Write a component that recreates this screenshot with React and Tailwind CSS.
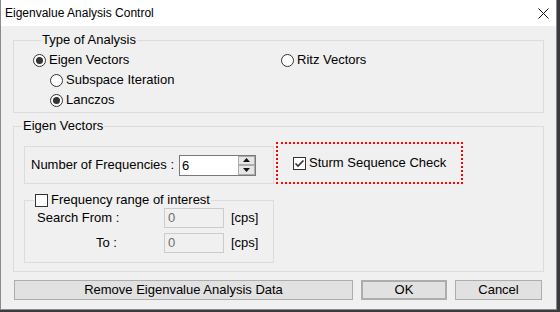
import React from 'react';

const Radio = ({ checked, label }) => (
  <div className="flex items-center h-4 gap-[3px]">
    <span className="w-[13px] h-[13px] rounded-full border border-[#333] bg-white flex items-center justify-center">
      {checked && <span className="w-[7px] h-[7px] rounded-full bg-[#333]" />}
    </span>
    <span>{label}</span>
  </div>
);

const Check = ({ checked }) => (
  <span className="w-[13px] h-[13px] border border-[#333] bg-white flex items-center justify-center">
    {checked && (
      <svg width="11" height="11" viewBox="0 0 11 11">
        <path d="M1.5 5.5 L4 8 L9.5 2.5" stroke="#333" strokeWidth="1.6" fill="none" />
      </svg>
    )}
  </span>
);

const Btn = ({ children, className = '' }) => (
  <button className={`h-5 bg-[#e1e1e1] border border-[#adadad] flex items-center justify-center ${className}`}>
    {children}
  </button>
);

const App = () => {
  return (
    <div
      className="w-[560px] h-[312px] bg-[#3a3a40] text-[13px] text-black leading-4"
      style={{ fontFamily: '"Liberation Sans", "Noto Sans CJK KR", sans-serif' }}
    >
      <div className="w-[557px] h-[310px] border-x border-b border-[#8a8a8a] bg-[#f0f0f0] flex flex-col">
        {/* Title bar */}
        <div className="h-[26px] bg-white flex items-center justify-between pl-1 pr-[7px] shrink-0 text-[12px]">
          <span>Eigenvalue Analysis Control</span>
          <svg width="11" height="11" viewBox="0 0 11 11">
            <path d="M0.5 0.5 L10.5 10.5 M10.5 0.5 L0.5 10.5" stroke="#111" strokeWidth="1" />
          </svg>
        </div>

        <div className="px-3 pt-[6px] flex flex-col">
          {/* Type of Analysis */}
          <fieldset className="border border-[#dcdcdc] w-[531px] pl-[19px] pb-[4px]">
            <legend className="ml-[8px] px-px h-4">Type of Analysis</legend>
            <div className="flex pt-1">
              <div className="w-[248px] flex flex-col gap-1">
                <Radio checked label="Eigen Vectors" />
                <div className="pl-[17px] flex flex-col gap-1">
                  <Radio label="Subspace Iteration" />
                  <Radio checked label="Lanczos" />
                </div>
              </div>
              <Radio label="Ritz Vectors" />
            </div>
          </fieldset>

          {/* Eigen Vectors */}
          <fieldset className="mt-[5px] border border-[#dcdcdc] w-[531px] pl-[10px] pb-[9px] h-[154px]">
            <legend className="ml-[-2px] px-px h-4">Eigen Vectors</legend>
            <div className="flex items-end gap-[2px] pt-2">
              <div className="w-[250px] h-[38px] border border-[#dcdcdc] flex items-center pl-[6px] gap-[6px]">
                <span className="w-[142px] whitespace-nowrap">Number of Frequencies :</span>
                <div className="w-[77px] h-[21px] border border-[#7a7a7a] bg-white flex">
                  <span className="flex-1 pl-[2px] leading-[19px]">6</span>
                  <div className="w-[17px] flex flex-col">
                    <div className="h-[9px] bg-[#e6e6e6] border border-[#adadad] flex items-center justify-center">
                      <svg width="7" height="4" viewBox="0 0 7 4"><path d="M3.5 0 L7 4 L0 4 Z" fill="#111" /></svg>
                    </div>
                    <div className="h-[10px] bg-[#e6e6e6] border border-[#adadad] flex items-center justify-center">
                      <svg width="7" height="4" viewBox="0 0 7 4"><path d="M0 0 L7 0 L3.5 4 Z" fill="#111" /></svg>
                    </div>
                  </div>
                </div>
              </div>
              <div className="w-[187px] h-[42px] border-2 border-dotted border-[#ff0000] flex items-center pl-[15px] gap-[3px]">
                <Check checked />
                <span>Sturm Sequence Check</span>
              </div>
            </div>

            {/* Frequency range */}
            <fieldset className="mt-[8px] border border-[#dcdcdc] w-[250px] pb-[9px]">
              <legend className="ml-[9px] px-px h-4 flex items-center gap-[3px]">
                <Check />
                <span>Frequency range of interest</span>
              </legend>
              <div className="flex flex-col gap-[5px] pl-[12px] pt-0">
                <div className="flex items-center h-5">
                  <span className="w-[127px]">Search From :</span>
                  <div className="w-[60px] h-5 border border-[#cccccc] bg-[#f0f0f0] text-[#6d6d6d] pl-[3px] leading-[18px]">0</div>
                  <span className="ml-[7px]">[cps]</span>
                </div>
                <div className="flex items-center h-5">
                  <span className="w-[127px] pl-[59px]">To :</span>
                  <div className="w-[60px] h-5 border border-[#cccccc] bg-[#f0f0f0] text-[#6d6d6d] pl-[3px] leading-[18px]">0</div>
                  <span className="ml-[7px]">[cps]</span>
                </div>
              </div>
            </fieldset>
          </fieldset>

          {/* Buttons */}
          <div className="flex mt-[8px] pl-px">
            <Btn className="w-[339px]">Remove Eigenvalue Analysis Data</Btn>
            <Btn className="w-[86px] ml-[8px] border-2 border-[#0078d7]">OK</Btn>
            <Btn className="w-[87px] ml-[8px]">Cancel</Btn>
          </div>
        </div>
      </div>
    </div>
  );
};

export default App;
